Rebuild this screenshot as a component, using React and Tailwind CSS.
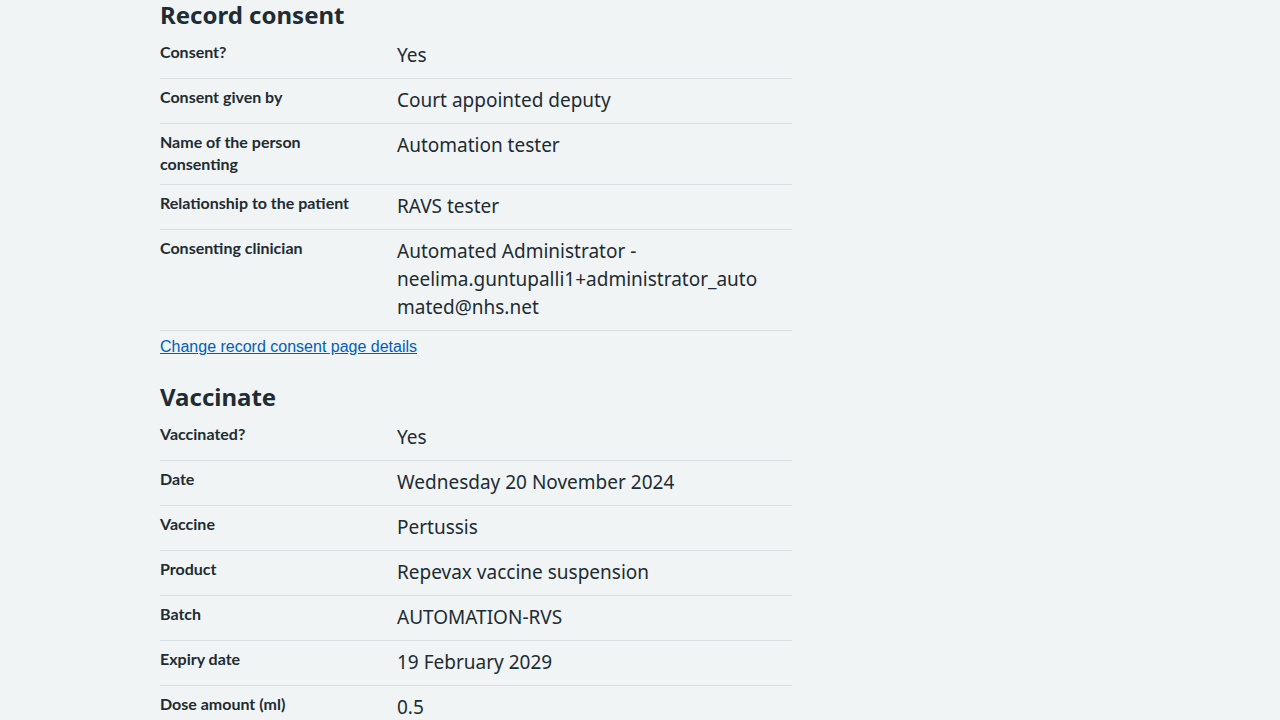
import React from "react";

const Row = ({ k, v }) => (
  <div className="flex border-b border-[#d8dde0] pt-[7px] pb-[9px]">
    <div
      className="w-[237px] shrink-0 pr-[24px] text-[16px] leading-[22px] font-bold"
      style={{ fontFamily: 'Lato, "Noto Sans", sans-serif' }}
    >
      {k}
    </div>
    <div className="flex-1 pr-[24px] text-[19px] leading-[28px]">{v}</div>
  </div>
);

export default function App() {
  return (
    <div
      className="min-h-screen bg-[#f0f4f5] text-[#212b32]"
      style={{ fontFamily: '"Noto Sans", "Open Sans", sans-serif' }}
    >
      <div className="mx-auto w-[960px]">
        <div className="w-[632px]">
          <h2 className="mb-[4px] text-[24px] leading-[30px] font-bold">Record consent</h2>
          <div>
            <Row k="Consent?" v="Yes" />
            <Row k="Consent given by" v="Court appointed deputy" />
            <Row k={<>Name of the person<br />consenting</>} v="Automation tester" />
            <Row k={<span className="whitespace-nowrap">Relationship to the patient</span>} v="RAVS tester" />
            <Row
              k="Consenting clinician"
              v={
                <>
                  Automated Administrator -<br />
                  <span className="whitespace-nowrap">neelima.guntupalli1+administrator_auto</span>
                  <br />
                  mated@nhs.net
                </>
              }
            />
          </div>
          <div className="pt-[4px] text-[16px] leading-[24px]" style={{ fontFamily: '"Liberation Sans", Arial, sans-serif' }}>
            <a href="#" className="text-[#005eb8] underline">Change record consent page details</a>
          </div>
          <h2 className="mt-[22px] mb-[3px] text-[24px] leading-[32px] font-bold">Vaccinate</h2>
          <div>
            <Row k="Vaccinated?" v="Yes" />
            <Row k="Date" v="Wednesday 20 November 2024" />
            <Row k="Vaccine" v="Pertussis" />
            <Row k="Product" v="Repevax vaccine suspension" />
            <Row k="Batch" v="AUTOMATION-RVS" />
            <Row k="Expiry date" v="19 February 2029" />
            <Row k="Dose amount (ml)" v="0.5" />
          </div>
        </div>
      </div>
    </div>
  );
}
